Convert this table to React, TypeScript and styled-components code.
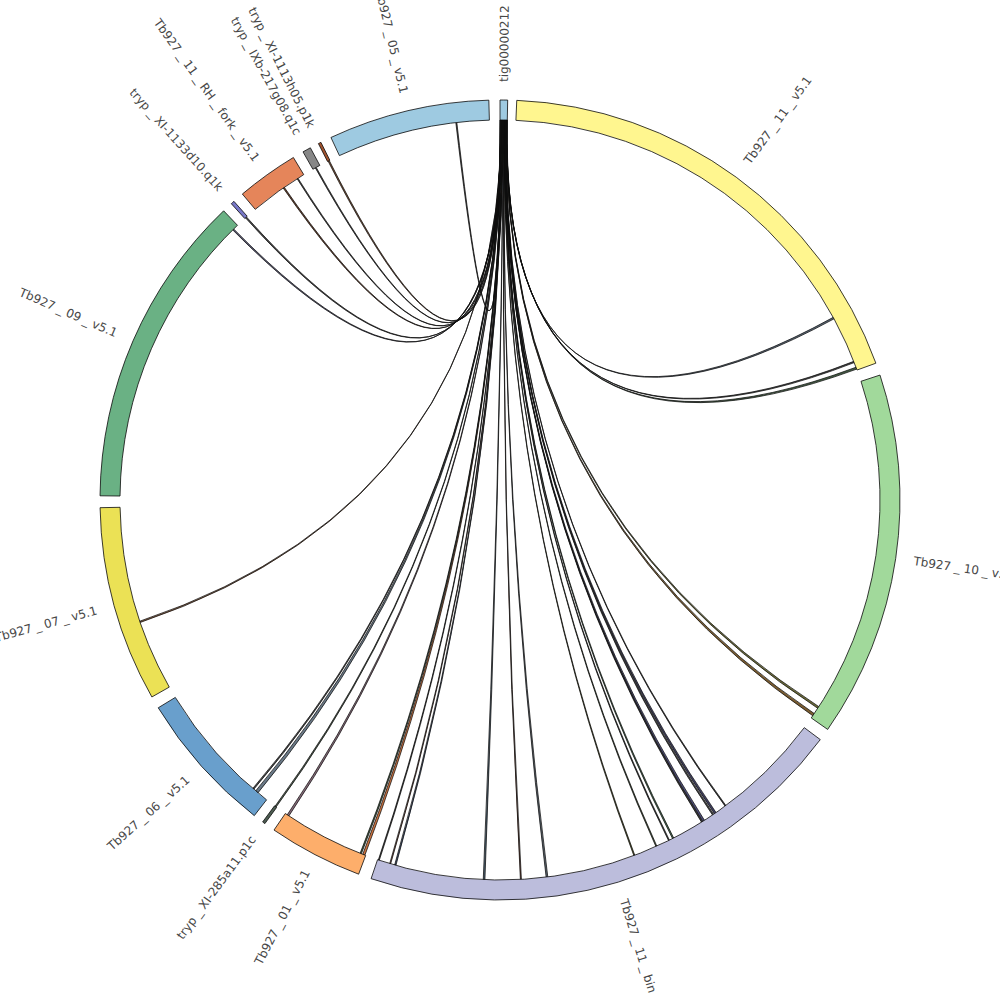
import React from 'react';
import styled, { createGlobalStyle } from 'styled-components';

const GlobalStyle = createGlobalStyle`
  html, body { margin: 0; padding: 0; background: #ffffff; }
  body { font-family: "DejaVu Sans", "Noto Sans", sans-serif; }
`;

const Page = styled.div`
  width: 1000px;
  height: 1000px;
  overflow: hidden;
  background: #ffffff;
`;

const Canvas = styled.svg`
  display: block;
  width: 1000px;
  height: 1000px;
`;

const SegmentShape = styled.path<{ $fill: string }>`
  fill: ${(p) => p.$fill};
  stroke: #0a0a0a;
  stroke-width: 0.8;
`;

const ChordShape = styled.path<{ $fill: string }>`
  fill: ${(p) => p.$fill};
  fill-opacity: 0.9;
  stroke: #0d0d0d;
  stroke-width: 0.75;
`;

const LabelText = styled.text<{ $end: boolean }>`
  font-family: "DejaVu Sans", "Noto Sans", sans-serif;
  font-size: 12px;
  fill: #474747;
  text-anchor: ${(p) => (p.$end ? 'end' : 'start')};
  dominant-baseline: central;
`;

const CX = 500;
const CY = 500;
const R_IN = 380;
const R_OUT = 400;
const R_LABEL = 418;

const pt = (r: number, a: number): [number, number] => {
  const t = (a * Math.PI) / 180;
  return [CX + r * Math.sin(t), CY - r * Math.cos(t)];
};

const f = (p: [number, number]) => `${p[0].toFixed(2)},${p[1].toFixed(2)}`;

function sector(a1: number, a2: number): string {
  const large = a2 - a1 > 180 ? 1 : 0;
  return `M${f(pt(R_OUT, a1))} A${R_OUT},${R_OUT} 0 ${large} 1 ${f(pt(R_OUT, a2))} L${f(
    pt(R_IN, a2)
  )} A${R_IN},${R_IN} 0 ${large} 0 ${f(pt(R_IN, a1))} Z`;
}

function ribbon(s1: number, s2: number, t1: number, t2: number): string {
  const A = f(pt(R_IN, s1));
  const B = f(pt(R_IN, s2));
  const C = f(pt(R_IN, t1));
  const D = f(pt(R_IN, t2));
  return `M${A} A${R_IN},${R_IN} 0 0 1 ${B} Q${CX},${CY} ${C} A${R_IN},${R_IN} 0 0 1 ${D} Q${CX},${CY} ${A} Z`;
}

type Segment = { name: string; start: number; end: number; color: string };

const segments: Segment[] = [
  { name: 'tig00000212', start: 0.0, end: 1.1, color: '#9ecae1' },
  { name: 'Tb927_11_v5.1', start: 2.4, end: 70.0, color: '#fff68f' },
  { name: 'Tb927_10_v5.1', start: 71.8, end: 125.0, color: '#a1d99b' },
  { name: 'Tb927_11_bin', start: 126.8, end: 198.8, color: '#bcbddc' },
  { name: 'Tb927_01_v5.1', start: 200.7, end: 214.4, color: '#fdae6b' },
  { name: 'tryp_XI-285a11.p1c', start: 216.0, end: 216.4, color: '#4d5d52' },
  { name: 'Tb927_06_v5.1', start: 217.9, end: 238.7, color: '#699fcc' },
  { name: 'Tb927_07_v5.1', start: 240.5, end: 268.9, color: '#ebe155' },
  { name: 'Tb927_09_v5.1', start: 270.6, end: 316.3, color: '#6ab184' },
  { name: 'tryp_XI-1133d10.q1k', start: 317.8, end: 318.3, color: '#7878c8' },
  { name: 'Tb927_11_RH_fork_v5.1', start: 319.9, end: 328.9, color: '#e5855a' },
  { name: 'tryp_IXb-217g08.q1c', start: 330.5, end: 331.7, color: '#878787' },
  { name: 'tryp_XI-1113h05.p1k', start: 333.0, end: 333.4, color: '#a0522d' },
  { name: 'Tb927_05_v5.1', start: 335.0, end: 358.4, color: '#9ecae1' },
];

type Link = { at: number; w: number; color: string };

const links: Link[] = [
  { at: 61.4, w: 0.25, color: '#4a5a6a' },
  { at: 68.7, w: 0.2, color: '#333333' },
  { at: 69.7, w: 0.3, color: '#2f4a2f' },
  { at: 123.1, w: 0.3, color: '#5a5a20' },
  { at: 124.4, w: 0.4, color: '#6b4a1a' },
  { at: 143.6, w: 0.15, color: '#222222' },
  { at: 145.5, w: 0.3, color: '#2a2a50' },
  { at: 145.9, w: 0.2, color: '#333333' },
  { at: 147.6, w: 0.3, color: '#3a3a6a' },
  { at: 147.9, w: 0.15, color: '#222222' },
  { at: 152.9, w: 0.2, color: '#2f5a3a' },
  { at: 153.6, w: 0.15, color: '#222222' },
  { at: 155.7, w: 0.15, color: '#30401f' },
  { at: 159.3, w: 0.15, color: '#4a4a10' },
  { at: 172.9, w: 0.25, color: '#4a5560' },
  { at: 176.85, w: 0.15, color: '#5a2a1a' },
  { at: 182.4, w: 0.25, color: '#3a5060' },
  { at: 196.0, w: 0.2, color: '#2a3a5a' },
  { at: 196.8, w: 0.15, color: '#6b3a2a' },
  { at: 198.6, w: 0.15, color: '#222222' },
  { at: 201.0, w: 0.35, color: '#c8642a' },
  { at: 201.5, w: 0.2, color: '#2a4a2a' },
  { at: 213.9, w: 0.3, color: '#7a5a6a' },
  { at: 216.2, w: 0.2, color: '#3a4a3a' },
  { at: 219.8, w: 0.45, color: '#5a6a7a' },
  { at: 220.5, w: 0.2, color: '#333333' },
  { at: 251.3, w: 0.2, color: '#7a4a2a' },
  { at: 315.4, w: 0.2, color: '#4a4a6a' },
  { at: 318.05, w: 0.2, color: '#333333' },
  { at: 325.3, w: 0.2, color: '#5a2a10' },
  { at: 327.8, w: 0.15, color: '#333333' },
  { at: 331.0, w: 0.15, color: '#333333' },
  { at: 333.2, w: 0.2, color: '#6a3a1a' },
  { at: 353.4, w: 0.15, color: '#333333' },
];

const SRC_FROM = 0.0;
const SRC_TO = 1.1;

function Label({ name, angle }: { name: string; angle: number }) {
  const [x, y] = pt(R_LABEL, angle);
  const end = angle >= 180;
  const rot = end ? angle - 270 : angle - 90;
  const parts = name.split('_');
  return (
    <LabelText
      $end={end}
      transform={`translate(${x.toFixed(2)},${y.toFixed(2)}) rotate(${rot.toFixed(2)})`}
    >
      {parts.map((p, i) =>
        i === 0 ? (
          <tspan key={i}>{p}</tspan>
        ) : (
          <React.Fragment key={i}>
            <tspan dx={3.5}>_</tspan>
            <tspan dx={3.5}>{p}</tspan>
          </React.Fragment>
        )
      )}
    </LabelText>
  );
}

function ChordLayer() {
  const step = (SRC_TO - SRC_FROM) / links.length;
  return (
    <g>
      {links.map((l, i) => {
        const s2 = SRC_TO - i * step;
        const s1 = s2 - step;
        const t1 = l.at - l.w / 2;
        const t2 = l.at + l.w / 2;
        return <ChordShape key={i} $fill={l.color} d={ribbon(s1, s2, t1, t2)} />;
      })}
    </g>
  );
}

function RingLayer() {
  return (
    <g>
      {segments.map((s) => (
        <SegmentShape key={s.name} $fill={s.color} d={sector(s.start, s.end)} />
      ))}
    </g>
  );
}

function LabelLayer() {
  return (
    <g>
      {segments.map((s) => (
        <Label key={s.name} name={s.name} angle={(s.start + s.end) / 2} />
      ))}
    </g>
  );
}

export default function App() {
  return (
    <Page>
      <GlobalStyle />
      <Canvas viewBox="0 0 1000 1000" xmlns="http://www.w3.org/2000/svg">
        <ChordLayer />
        <RingLayer />
        <LabelLayer />
      </Canvas>
    </Page>
  );
}
